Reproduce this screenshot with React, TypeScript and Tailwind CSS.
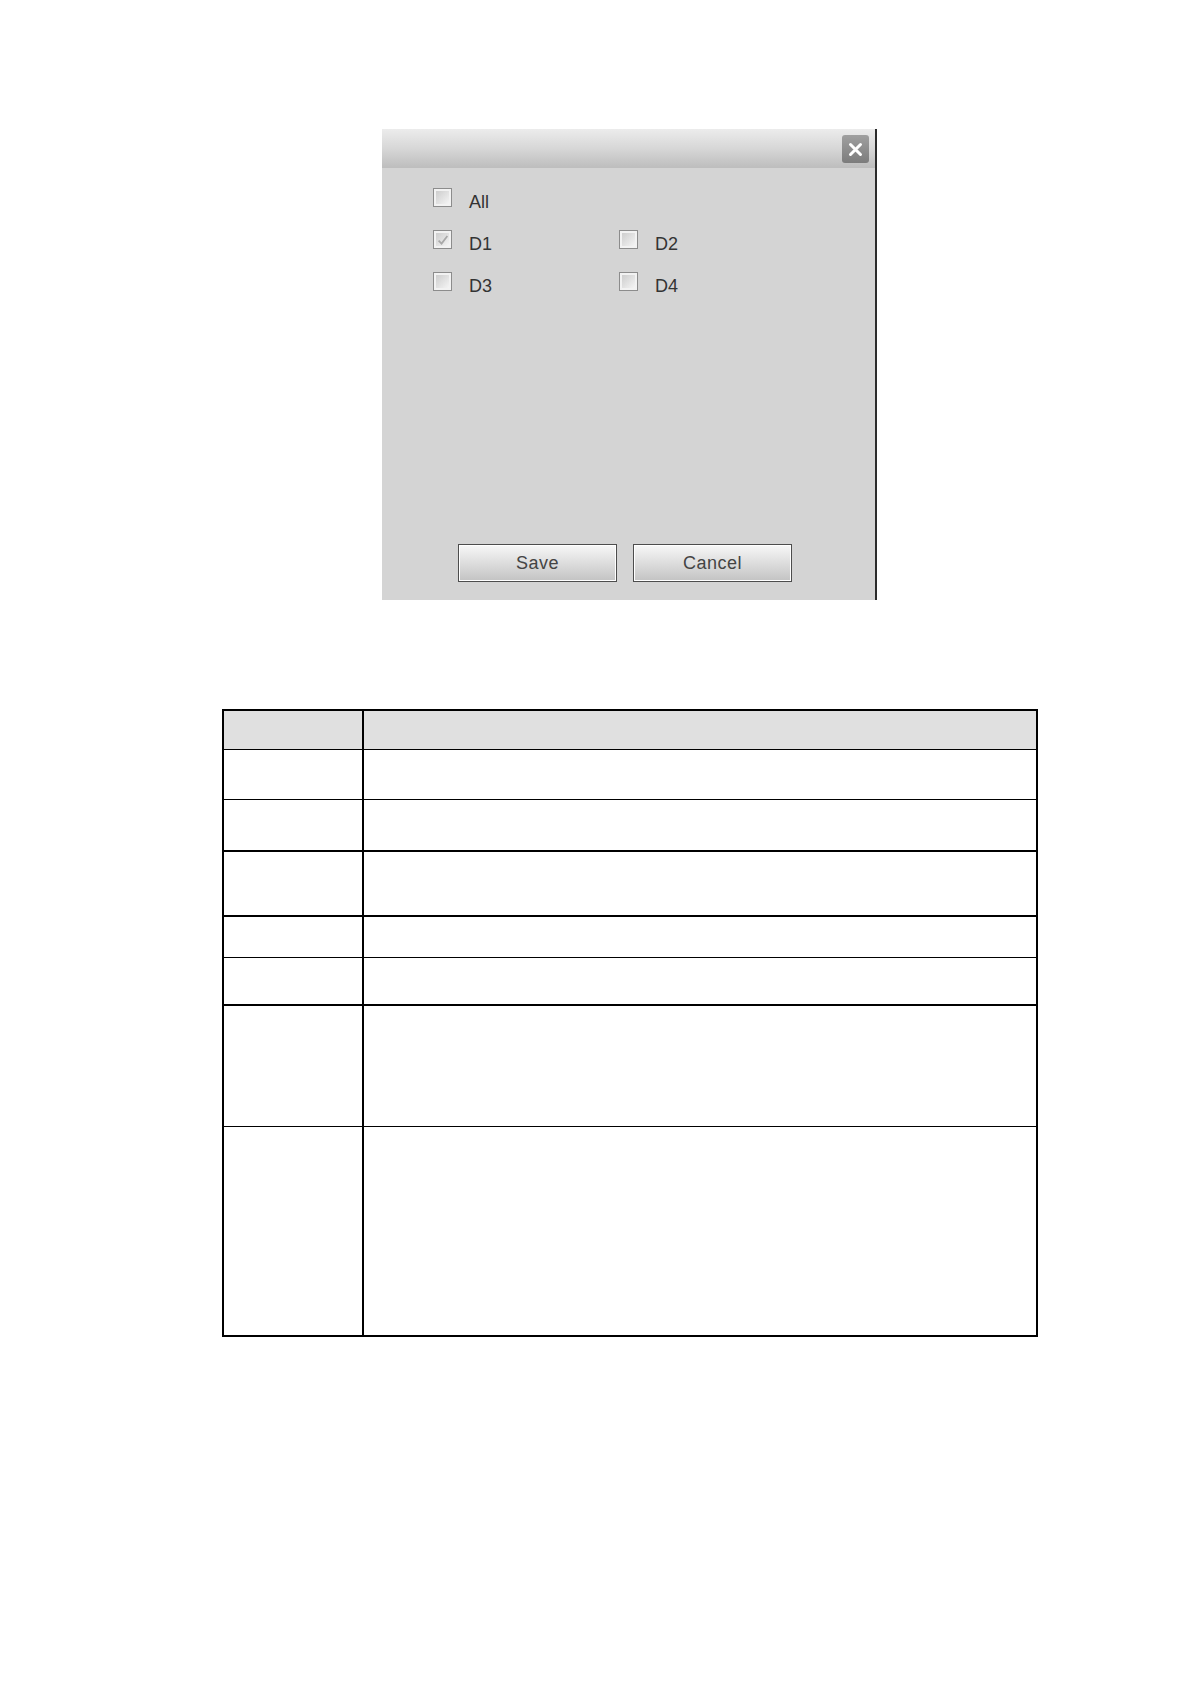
const Checkbox = ({ checked = false }: { checked?: boolean }) => {
  return (
    <div className="w-[19px] h-[19px] border border-[#8c8c8c] bg-[#f2f2f2] p-[2px] flex-shrink-0">
      <div className="w-full h-full bg-linear-to-br from-[#cdcdcd] to-[#f4f4f4] flex items-center justify-center">
        {checked && (
          <svg width="12" height="12" viewBox="0 0 11 11">
            <path d="M1.5 6 L4.2 8.8 L9.5 1.8" fill="none" stroke="#a8a8a8" strokeWidth="1.6" />
          </svg>
        )}
      </div>
    </div>
  );
};

const Option = ({ label, checked = false }: { label: string; checked?: boolean }) => {
  return (
    <div className="w-[186px] flex items-start">
      <Checkbox checked={checked} />
      <span className="ml-[17px] mt-[5px] text-[18px] leading-none text-[#333]">{label}</span>
    </div>
  );
};

const Button = ({ label }: { label: string }) => {
  return (
    <button className="w-[159px] h-[38px] border border-[#4d4d4d] bg-linear-to-b from-[#f8f8f8] to-[#c3c3c3] shadow-[inset_0_0_0_1px_#ffffff] text-[18px] text-[#444] tracking-[0.5px]">
      {label}
    </button>
  );
};

const Dialog = () => {
  return (
    <div className="ml-[382px] w-[495px] h-[471px] bg-[#d4d4d4] border-r-2 border-[#2b2b2b] flex flex-col">
      <div className="h-[39px] bg-linear-to-b from-[#ececec] via-[#d7d7d7] to-[#bdbdbd] flex justify-end items-start pt-[6px] pr-[6px]">
        <div className="w-[27px] h-[28px] rounded-[3px] bg-linear-to-b from-[#a0a0a0] to-[#7c7c7c] flex items-center justify-center">
          <svg width="15" height="15" viewBox="0 0 15 15">
            <path d="M2.5 2.5 L12.5 12.5 M12.5 2.5 L2.5 12.5" stroke="#ffffff" strokeWidth="3" strokeLinecap="round" />
          </svg>
        </div>
      </div>
      <div className="pl-[51px] pt-[20px] flex flex-col gap-[19px]">
        <div className="flex">
          <Option label="All" />
        </div>
        <div className="flex">
          <Option label="D1" checked />
          <Option label="D2" />
        </div>
        <div className="flex">
          <Option label="D3" />
          <Option label="D4" />
        </div>
      </div>
      <div className="mt-auto mb-[18px] pl-[76px] flex gap-[16px]">
        <Button label="Save" />
        <Button label="Cancel" />
      </div>
    </div>
  );
};

const rows = [
  { h: "h-[39px]", b: "border-b", bg: "bg-[#e0e0e0]" },
  { h: "h-[50px]", b: "border-b", bg: "bg-white" },
  { h: "h-[52px]", b: "border-b-2", bg: "bg-white" },
  { h: "h-[65px]", b: "border-b-2", bg: "bg-white" },
  { h: "h-[41px]", b: "border-b", bg: "bg-white" },
  { h: "h-[48px]", b: "border-b-2", bg: "bg-white" },
  { h: "h-[121px]", b: "border-b", bg: "bg-white" },
  { h: "h-[208px]", b: "", bg: "bg-white" },
];

const ParamTable = () => {
  return (
    <div className="ml-[222px] mt-[109px] w-[816px] border-2 border-black">
      {rows.map((row, i) => (
        <div key={i} className={`flex border-black ${row.h} ${row.b} ${row.bg}`}>
          <div className="w-[140px] border-r-2 border-black" />
          <div className="flex-1" />
        </div>
      ))}
    </div>
  );
};

const App = () => {
  return (
    <div className="w-[1191px] min-h-[1684px] bg-white pt-[129px] font-['Liberation_Sans',Arial,sans-serif]">
      <Dialog />
      <ParamTable />
    </div>
  );
};

export default App;
